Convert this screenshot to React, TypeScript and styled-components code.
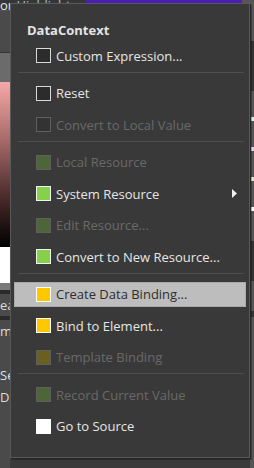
import styled, { createGlobalStyle } from "styled-components";

const GlobalStyle = createGlobalStyle`
  html, body {
    margin: 0;
    padding: 0;
    background: #3a3a3a;
  }
  body {
    font-family: "Open Sans", "Noto Sans", sans-serif;
  }
`;

type BoxKind =
  | "empty"
  | "emptyOff"
  | "green"
  | "greenOff"
  | "yellow"
  | "yellowOff"
  | "white";

const boxColors: Record<BoxKind, { fill: string; edge: string }> = {
  empty: { fill: "#2c2c2c", edge: "#d9d9d9" },
  emptyOff: { fill: "#333333", edge: "#5f5f5f" },
  green: { fill: "#86d04b", edge: "#f2f2f2" },
  greenOff: { fill: "#4c6638", edge: "#5f5f5f" },
  yellow: { fill: "#ffc700", edge: "#ffffff" },
  yellowOff: { fill: "#6a5e20", edge: "#5f5f5f" },
  white: { fill: "#ffffff", edge: "#ffffff" },
};

type Entry =
  | { sep: true }
  | {
      label: string;
      box: BoxKind;
      disabled?: boolean;
      active?: boolean;
      submenu?: boolean;
    };

const entries: Entry[] = [
  { label: "Custom Expression...", box: "empty" },
  { sep: true },
  { label: "Reset", box: "empty" },
  { label: "Convert to Local Value", box: "emptyOff", disabled: true },
  { sep: true },
  { label: "Local Resource", box: "greenOff", disabled: true },
  { label: "System Resource", box: "green", submenu: true },
  { label: "Edit Resource...", box: "greenOff", disabled: true },
  { label: "Convert to New Resource...", box: "green" },
  { sep: true },
  { label: "Create Data Binding...", box: "yellow", active: true },
  { label: "Bind to Element...", box: "yellow" },
  { label: "Template Binding", box: "yellowOff", disabled: true },
  { sep: true },
  { label: "Record Current Value", box: "greenOff", disabled: true },
  { label: "Go to Source", box: "white" },
];

// ---- background (the designer panels behind the popup) ----

const Screen = styled.div`
  position: relative;
  width: 254px;
  height: 468px;
  overflow: hidden;
  display: flex;
  flex-direction: column;
  background: #3a3a3a;
`;

const TopBar = styled.div`
  display: flex;
  height: 10px;
  flex-shrink: 0;
  border-bottom: 1px solid #555;
`;

const TopLabel = styled.div`
  width: 86px;
  background: #363636;
  color: #e8e8e8;
  font-size: 13px;
  line-height: 10px;
  white-space: nowrap;
  overflow: hidden;
  span {
    color: #9fc3e6;
    text-decoration: underline;
  }
`;

const ColorField = styled.div`
  flex: 1;
  background: #4b1fb3;
`;

const TopCap = styled.div`
  width: 12px;
  background: #555;
`;

const Body = styled.div`
  flex: 1;
  display: flex;
`;

const LeftPane = styled.div`
  width: 10px;
  display: flex;
  flex-direction: column;
  overflow: hidden;
  background: #4a4a4a;
`;

const PaneHead = styled.div`
  height: 41px;
  border-bottom: 1px solid #333;
`;

const GrayStrip = styled.div`
  height: 29px;
  background: #6b6b6b;
`;

const Spectrum = styled.div`
  height: 165px;
  background: linear-gradient(#f6a8a8, #a86a6a 35%, #4a2a2a 70%, #000);
`;

const Preview = styled.div`
  height: 36px;
  background: #ffffff;
  border-bottom: 7px solid #7a7a7a;
`;

const PaneLabel = styled.div<{ $color?: string; $rule?: boolean }>`
  height: 22px;
  color: ${(p) => p.$color || "#dcdcdc"};
  font-size: 13px;
  line-height: 22px;
  white-space: nowrap;
  border-top: ${(p) => (p.$rule ? "4px solid #2a2a2a" : "0")};
`;

const Middle = styled.div`
  flex: 1;
  background: #3a3a3a;
`;

const RightPane = styled.div`
  width: 4px;
  display: flex;
  flex-direction: column;
  background: #555;
`;

const Tick = styled.div<{ $color: string }>`
  height: 4px;
  margin-top: 26px;
  background: ${(p) => p.$color};
`;

const DarkBlock = styled.div<{ $h: number }>`
  height: ${(p) => p.$h}px;
  margin-top: 30px;
  background: #333;
`;

// ---- the context menu ----

const Menu = styled.div`
  position: absolute;
  left: 10px;
  top: 3px;
  width: 240px;
  height: 455px;
  box-sizing: border-box;
  background: #393939;
  border: 1px solid #595959;
  box-shadow: 1px 1px 0 #262626, 2px 2px 0 rgba(0, 0, 0, 0.25);
  font-family: "Open Sans", "Noto Sans", sans-serif;
`;

const Title = styled.div`
  padding: 18px 0 2px 16px;
  height: 16px;
  font-size: 13px;
  line-height: 16px;
  font-weight: 700;
  color: #e4e4e4;
`;

const Row = styled.div`
  height: 31.5px;
  box-sizing: border-box;
  padding: 3px;
  display: flex;
`;

const RowInner = styled.div<{ $active?: boolean; $disabled?: boolean }>`
  flex: 1;
  display: flex;
  align-items: center;
  gap: 5px;
  padding-left: 21px;
  border: 1px solid ${(p) => (p.$active ? "#a9a9a9" : "transparent")};
  background: ${(p) => (p.$active ? "#bdbdbd" : "transparent")};
  color: ${(p) => (p.$active ? "#2e2e2e" : p.$disabled ? "#696969" : "#e6e6e6")};
  font-size: 13px;
  line-height: 16px;
  white-space: nowrap;
`;

const Swatch = styled.span<{ $kind: BoxKind }>`
  width: 15px;
  height: 15px;
  box-sizing: border-box;
  flex-shrink: 0;
  background: ${(p) => boxColors[p.$kind].fill};
  border: 1px solid ${(p) => boxColors[p.$kind].edge};
`;

const Arrow = styled.svg`
  margin-left: auto;
  margin-right: 8px;
`;

const Separator = styled.div`
  height: 6px;
  box-sizing: border-box;
  margin: 0 5px 0 7px;
  border-top: 1px solid #4e4e4e;
`;

export default function App() {
  return (
    <>
      <GlobalStyle />
      <Screen>
        <TopBar>
          <TopLabel>
            or <span>Highlight</span>
          </TopLabel>
          <ColorField />
          <TopCap />
        </TopBar>
        <Body>
          <LeftPane>
            <PaneHead />
            <GrayStrip />
            <Spectrum />
            <Preview />
            <PaneLabel $rule>ea</PaneLabel>
            <PaneLabel $rule>m</PaneLabel>
            <PaneLabel />
            <PaneLabel $color="#d8e4f0">Se</PaneLabel>
            <PaneLabel>D:</PaneLabel>
          </LeftPane>
          <Middle />
          <RightPane>
            <DarkBlock $h={50} />
            <Tick $color="#cfe8e8" />
            <Tick $color="#e2cfe2" />
            <Tick $color="#e0e2cc" />
            <Tick $color="#f2f2f2" />
            <DarkBlock $h={40} />
            <DarkBlock $h={6} />
          </RightPane>
        </Body>

        <Menu>
          <Title>DataContext</Title>
          {entries.map((e, i) =>
            "sep" in e ? (
              <Separator key={i} />
            ) : (
              <Row key={i}>
                <RowInner $active={e.active} $disabled={e.disabled}>
                  <Swatch $kind={e.box} />
                  {e.label}
                  {e.submenu && (
                    <Arrow width="5" height="9" viewBox="0 0 5 9">
                      <path d="M0 0 L5 4.5 L0 9 Z" fill="#f0f0f0" />
                    </Arrow>
                  )}
                </RowInner>
              </Row>
            )
          )}
        </Menu>
      </Screen>
    </>
  );
}
